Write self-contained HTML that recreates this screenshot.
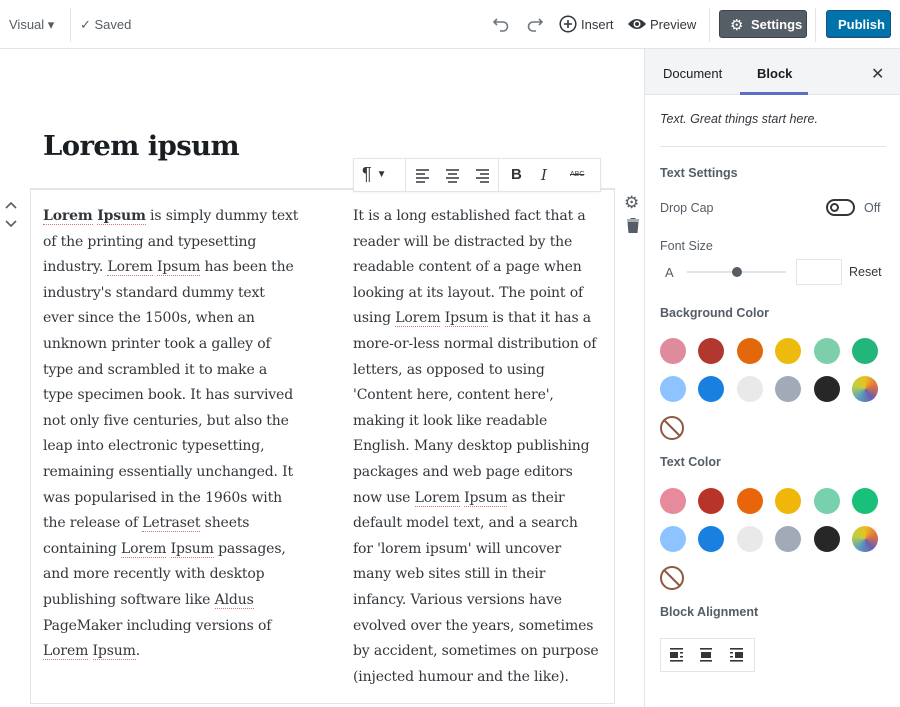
<!DOCTYPE html>
<html><head><meta charset="utf-8"><style>
*{box-sizing:border-box;margin:0;padding:0}
body{width:900px;height:707px;overflow:hidden;background:#fff;font-family:"Liberation Sans",sans-serif;color:#23282d;position:relative}
.abs{position:absolute}
.top{position:absolute;left:0;top:0;width:900px;height:49px;border-bottom:1px solid #e2e4e7;background:#fff}
.t{position:absolute;font-size:13px;color:#555d66;white-space:nowrap}
.serif{font-family:"DejaVu Serif","Liberation Serif",serif}
.col{position:absolute;top:204px;font-size:14px;line-height:25.6px;color:#32373c;white-space:nowrap;letter-spacing:-0.15px}
.u{border-bottom:1px dotted #c77;}
.side{position:absolute;left:644px;top:49px;width:256px;height:658px;border-left:1px solid #e2e4e7;background:#fff}
.lbl{position:absolute;left:15px;font-size:12.5px;font-weight:bold;color:#555d66}
.c{position:absolute;width:26px;height:26px;border-radius:50%}
.no{position:absolute;width:24px;height:24px;border-radius:50%;border:2px solid #8a5a44}
.no:after{content:"";position:absolute;left:9px;top:-2px;width:2px;height:24px;background:#8a5a44;transform:rotate(-45deg)}
</style></head><body>
<div class="top">
 <div class="t" style="left:9px;top:17px;">Visual ▾</div>
 <div class="abs" style="left:70px;top:8px;width:1px;height:34px;background:#e2e4e7"></div>
 <div class="t" style="left:80px;top:17px;">✓ Saved</div>
 <svg class="abs" style="left:492px;top:15px" width="18" height="18" viewBox="0 0 18 18"><path d="M5 4 L2 7 L5 10 M2 7 H11 A4.5 4.5 0 0 1 11 16 H8" fill="none" stroke="#6c7781" stroke-width="1.6"/></svg>
 <svg class="abs" style="left:526px;top:15px" width="18" height="18" viewBox="0 0 18 18"><path d="M13 4 L16 7 L13 10 M16 7 H7 A4.5 4.5 0 0 0 7 16 H10" fill="none" stroke="#6c7781" stroke-width="1.6"/></svg>
 <svg class="abs" style="left:559px;top:15px" width="18" height="18" viewBox="0 0 18 18"><circle cx="9" cy="9" r="7.8" fill="none" stroke="#32373c" stroke-width="1.5"/><path d="M9 5v8M5 9h8" stroke="#32373c" stroke-width="1.6"/></svg>
 <div class="t" style="left:581px;top:17px;color:#32373c">Insert</div>
 <svg class="abs" style="left:627px;top:16px" width="20" height="16" viewBox="0 0 20 16"><path d="M1 8 Q10 -2 19 8 Q10 18 1 8Z" fill="#32373c"/><circle cx="10" cy="8" r="3.5" fill="#fff"/><circle cx="10" cy="8" r="2" fill="#32373c"/></svg>
 <div class="t" style="left:650px;top:17px;color:#32373c">Preview</div>
 <div class="abs" style="left:709px;top:8px;width:1px;height:34px;background:#e2e4e7"></div>
 <div class="abs" style="left:719px;top:10px;width:88px;height:28px;background:#555d66;border-radius:3px;border:1px solid #3d4348"></div>
 <div class="t" style="left:730px;top:16px;color:#fff;font-size:15px">⚙</div>
 <div class="t" style="left:751px;top:17px;color:#fff;font-weight:bold">Settings</div>
 <div class="abs" style="left:815px;top:8px;width:1px;height:34px;background:#e2e4e7"></div>
 <div class="abs" style="left:826px;top:10px;width:65px;height:28px;background:#0073aa;border-radius:3px;border:1px solid #1b4f8a;box-shadow:inset 0 -1px 0 #135e96"></div>
 <div class="t" style="left:838px;top:17px;color:#fff;font-weight:bold">Publish</div>
</div>

<div class="abs serif" style="left:43px;top:130px;font-size:27.5px;font-weight:bold;color:#191e23;letter-spacing:-0.6px">Lorem ipsum</div>

<svg class="abs" style="left:4px;top:198px" width="14" height="34" viewBox="0 0 14 34"><path d="M2 10 L7 5 L12 10 M2 23 L7 28 L12 23" fill="none" stroke="#555d66" stroke-width="1.6"/></svg>

<div class="abs" style="left:30px;top:188px;width:585px;height:516px;border:1px solid #e2e4e7;border-top:2px solid #e2e4e7"></div>
<div class="abs" style="left:353px;top:158px;width:248px;height:34px;background:#fff;border:1px solid #e2e4e7;box-shadow:0 1px 2px rgba(0,0,0,.05)"></div>
<div class="abs" style="left:405px;top:159px;width:1px;height:32px;background:#e2e4e7"></div>
<div class="abs" style="left:498px;top:159px;width:1px;height:32px;background:#e2e4e7"></div>
<div class="t" style="left:362px;top:164px;font-size:18px;color:#32373c">¶ <span style="font-size:10px;vertical-align:3px">▼</span></div>
<svg class="abs" style="left:414px;top:167px" width="80" height="16" viewBox="0 0 80 16"><g stroke="#32373c" stroke-width="1.5"><path d="M2 3h13M2 7h9M2 11h13M2 15h9"/><path d="M32 3h13M34 7h9M32 11h13M34 15h9"/><path d="M62 3h13M66 7h9M62 11h13M66 15h9"/></g></svg>
<div class="t" style="left:511px;top:166px;font-size:15px;font-weight:bold;color:#32373c">B</div>
<div class="t serif" style="left:541px;top:166px;font-size:15px;font-style:italic;color:#32373c">I</div>
<div class="t" style="left:570px;top:171px;font-size:7px;color:#32373c;text-decoration:line-through">ABC</div>

<div class="t" style="left:624px;top:193px;font-size:17px;color:#555d66">⚙</div>
<svg class="abs" style="left:627px;top:218px" width="12" height="15" viewBox="0 0 12 15"><path d="M0 2h12M4 1V0h4v1M1 4h10l-1 11H2Z" fill="#555d66" stroke="#555d66" stroke-width="1"/></svg>

<div class="col serif" style="left:43px"><b><span class="u">Lorem</span> <span class="u">Ipsum</span></b> is simply dummy text<br>of the printing and typesetting<br>industry. <span class="u">Lorem</span> <span class="u">Ipsum</span> has been the<br>industry's standard dummy text<br>ever since the 1500s, when an<br>unknown printer took a galley of<br>type and scrambled it to make a<br>type specimen book. It has survived<br>not only five centuries, but also the<br>leap into electronic typesetting,<br>remaining essentially unchanged. It<br>was popularised in the 1960s with<br>the release of <span class="u">Letraset</span> sheets<br>containing <span class="u">Lorem</span> <span class="u">Ipsum</span> passages,<br>and more recently with desktop<br>publishing software like <span class="u">Aldus</span><br>PageMaker including versions of<br><span class="u">Lorem</span> <span class="u">Ipsum</span>.</div>
<div class="col serif" style="left:353px">It is a long established fact that a<br>reader will be distracted by the<br>readable content of a page when<br>looking at its layout. The point of<br>using <span class="u">Lorem</span> <span class="u">Ipsum</span> is that it has a<br>more-or-less normal distribution of<br>letters, as opposed to using<br>'Content here, content here',<br>making it look like readable<br>English. Many desktop publishing<br>packages and web page editors<br>now use <span class="u">Lorem</span> <span class="u">Ipsum</span> as their<br>default model text, and a search<br>for 'lorem ipsum' will uncover<br>many web sites still in their<br>infancy. Various versions have<br>evolved over the years, sometimes<br>by accident, sometimes on purpose<br>(injected humour and the like).</div>

<div class="side">
 <div class="abs" style="left:0;top:0;width:256px;height:46px;background:#f3f4f5;border-bottom:1px solid #e2e4e7"></div>
 <div class="t" style="left:18px;top:17px;color:#191e23;font-size:13px">Document</div>
 <div class="t" style="left:112px;top:17px;color:#191e23;font-size:13px;font-weight:bold">Block</div>
 <div class="abs" style="left:95px;top:43px;width:68px;height:3px;background:#5b6dc8"></div>
 <div class="t" style="left:226px;top:15px;color:#32373c;font-size:16px">✕</div>
 <div class="t" style="left:15px;top:63px;font-style:italic;color:#32373c;font-size:12.5px">Text. Great things start here.</div>
 <div class="abs" style="left:15px;top:97px;width:226px;height:1px;background:#e2e4e7"></div>
 <div class="lbl" style="top:117px">Text Settings</div>
 <div class="t" style="left:15px;top:152px;color:#555d66;font-size:12.5px">Drop Cap</div>
 <div class="abs" style="left:181px;top:150px;width:29px;height:17px;border:2px solid #32373c;border-radius:9px"></div>
 <div class="abs" style="left:185px;top:154px;width:9px;height:9px;border:2px solid #32373c;border-radius:50%"></div>
 <div class="t" style="left:219px;top:152px;color:#555d66;font-size:12.5px">Off</div>
 <div class="t" style="left:15px;top:190px;color:#555d66;font-size:12.5px">Font Size</div>
 <div class="t" style="left:20px;top:216px;color:#555d66;font-size:13px">A</div>
 <div class="abs" style="left:42px;top:222px;width:99px;height:2px;background:#e2e4e7"></div>
 <div class="abs" style="left:87px;top:218px;width:10px;height:10px;border-radius:50%;background:#555d66"></div>
 <div class="abs" style="left:151px;top:210px;width:46px;height:26px;border:1px solid #e2e4e7"></div>
 <div class="t" style="left:204px;top:216px;color:#32373c;font-size:12.5px">Reset</div>
 <div class="lbl" style="top:257px">Background Color</div>
 <div class="c" style="left:15px;top:289px;background:#e08b9c"></div>
 <div class="c" style="left:53px;top:289px;background:#b0382e"></div>
 <div class="c" style="left:92px;top:289px;background:#e2680b"></div>
 <div class="c" style="left:130px;top:289px;background:#ecbb0d"></div>
 <div class="c" style="left:169px;top:289px;background:#7dcfac"></div>
 <div class="c" style="left:207px;top:289px;background:#22b67a"></div>
 <div class="c" style="left:15px;top:327px;background:#8dc4ff"></div>
 <div class="c" style="left:53px;top:327px;background:#1a80e0"></div>
 <div class="c" style="left:92px;top:327px;background:#e9e9e9"></div>
 <div class="c" style="left:130px;top:327px;background:#a2aab8"></div>
 <div class="c" style="left:169px;top:327px;background:#272727"></div>
 <div class="c" style="left:207px;top:327px;background:conic-gradient(#e8c020,#e07040,#6a60b0,#5aa0c0,#c0d040,#e8c020)"></div>
 <div class="no" style="left:15px;top:367px"></div>
 <div class="lbl" style="top:406px">Text Color</div>
 <div class="c" style="left:15px;top:439px;background:#e68a9c"></div>
 <div class="c" style="left:53px;top:439px;background:#b93428"></div>
 <div class="c" style="left:92px;top:439px;background:#e9650a"></div>
 <div class="c" style="left:130px;top:439px;background:#f0b70a"></div>
 <div class="c" style="left:169px;top:439px;background:#78d0ac"></div>
 <div class="c" style="left:207px;top:439px;background:#18c07a"></div>
 <div class="c" style="left:15px;top:477px;background:#8dc4ff"></div>
 <div class="c" style="left:53px;top:477px;background:#1a80e0"></div>
 <div class="c" style="left:92px;top:477px;background:#e9e9e9"></div>
 <div class="c" style="left:130px;top:477px;background:#a2aab8"></div>
 <div class="c" style="left:169px;top:477px;background:#272727"></div>
 <div class="c" style="left:207px;top:477px;background:conic-gradient(#e8c020,#e07040,#6a60b0,#5aa0c0,#c0d040,#e8c020)"></div>
 <div class="no" style="left:15px;top:517px"></div>
 <div class="lbl" style="top:556px">Block Alignment</div>
 <div class="abs" style="left:15px;top:589px;width:95px;height:34px;border:1px solid #e2e4e7"></div>
 <svg class="abs" style="left:24px;top:598px" width="80" height="16" viewBox="0 0 80 16"><g fill="#32373c"><rect x="1" y="1" width="13" height="1.6"/><rect x="1" y="5" width="8" height="6"/><rect x="11" y="5" width="3" height="1.5"/><rect x="11" y="9" width="3" height="1.5"/><rect x="1" y="13" width="13" height="1.6"/><rect x="31" y="1" width="12" height="1.6"/><rect x="32" y="5" width="10" height="6"/><rect x="31" y="13" width="12" height="1.6"/><rect x="61" y="1" width="13" height="1.6"/><rect x="66" y="5" width="8" height="6"/><rect x="61" y="5" width="3" height="1.5"/><rect x="61" y="9" width="3" height="1.5"/><rect x="61" y="13" width="13" height="1.6"/></g></svg>
</div>
</body></html>
